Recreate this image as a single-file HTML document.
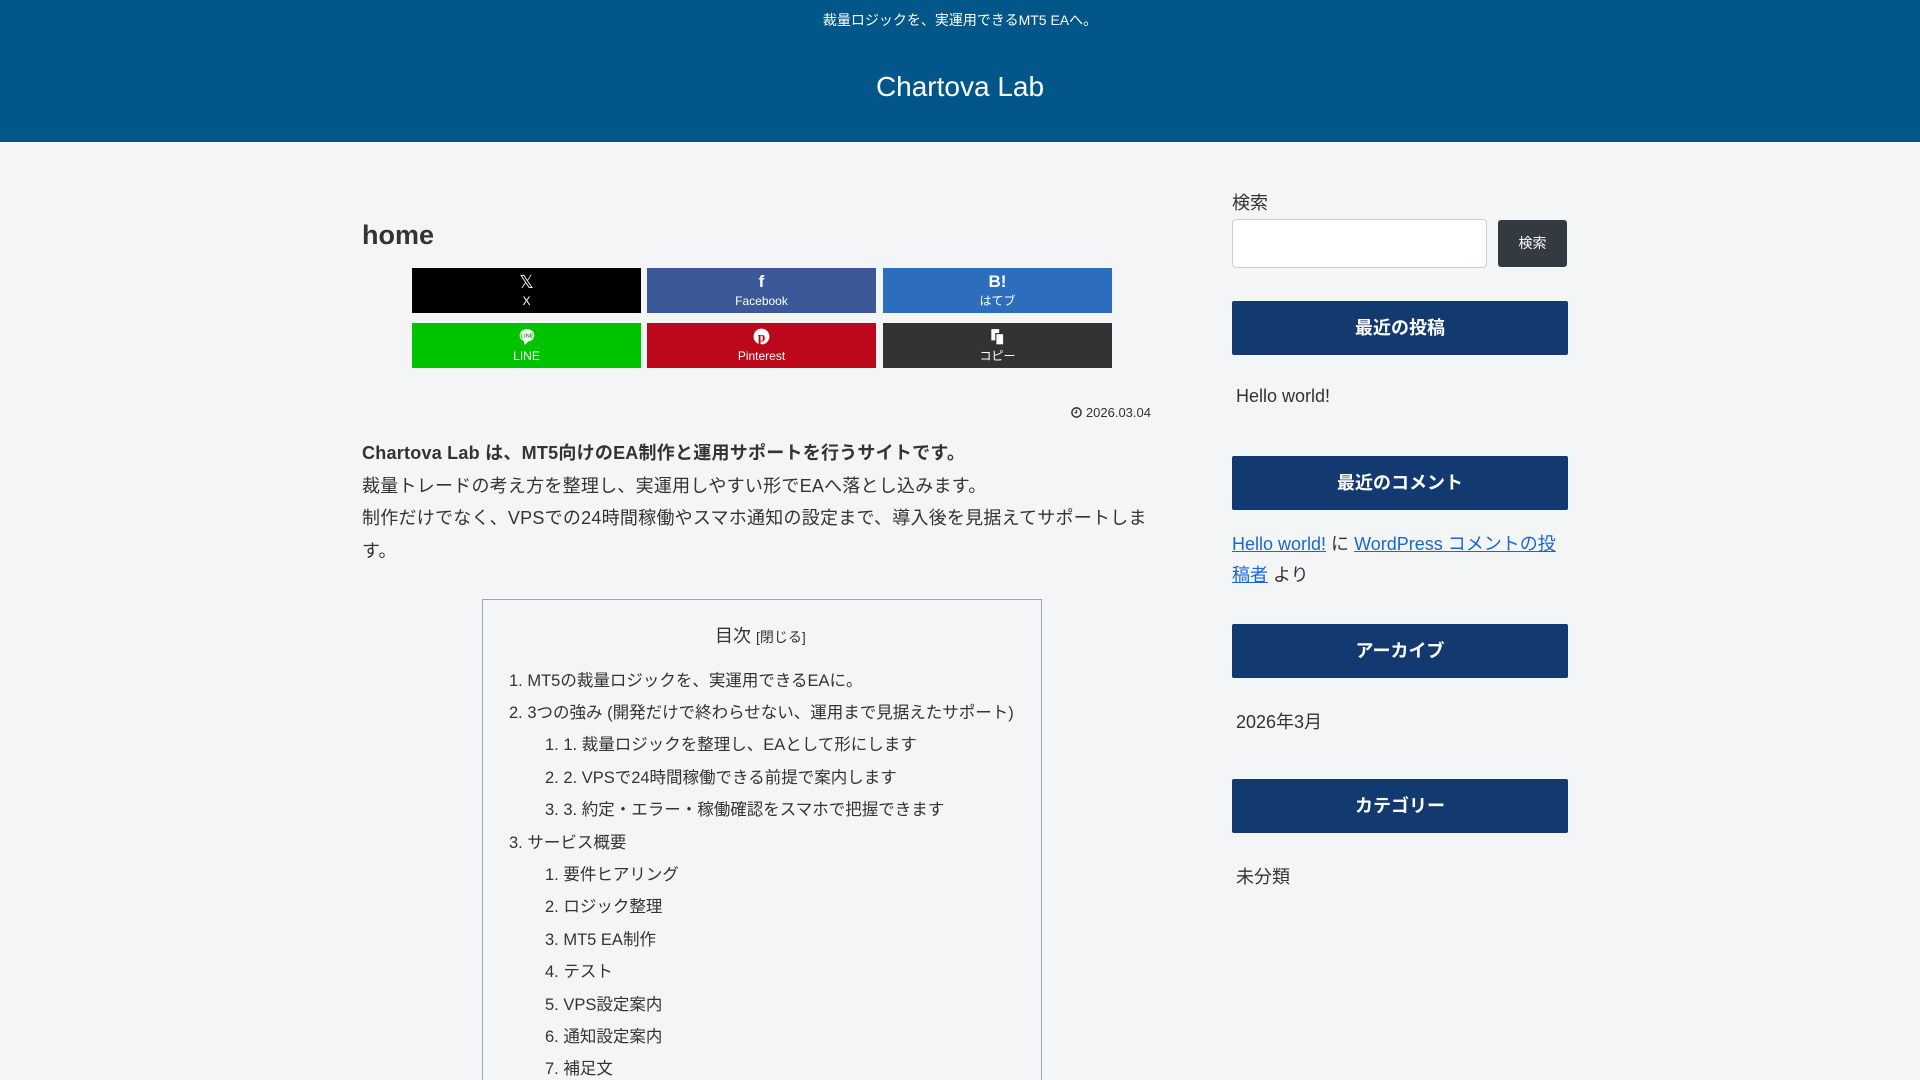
<!DOCTYPE html>
<html style="height:1080px;overflow:hidden"><head><meta charset="utf-8"><style>
*{margin:0;padding:0;box-sizing:border-box}
body{width:1920px;height:1080px;overflow:hidden;background:#f4f5f7;font-family:"Liberation Sans","Noto Sans CJK JP",sans-serif;color:#333;position:relative}
.a{position:absolute;white-space:nowrap}
#hd{position:absolute;left:0;top:0;width:1920px;height:142px;background:#02568a;color:#fff}
.sb{position:absolute;width:229px;height:45px;color:#fff;text-align:center;font-size:12px}
.sb .i{position:absolute;top:5px;left:0;right:0;font-size:17px;font-weight:bold;line-height:18px}
.sb .t{position:absolute;top:26px;left:0;right:0;line-height:14px}
.p{font-size:18px;line-height:32.5px;letter-spacing:0.24px}
.toc{position:absolute;left:482px;top:599px;width:560px;height:481px;border:1px solid #9aa5bd;border-bottom:none}
.ti{position:absolute;font-size:16.5px;white-space:nowrap;color:#333;line-height:20px}
.wh{position:absolute;left:1232px;width:336px;height:54px;background:#133a70;color:#fff;font-size:18px;font-weight:bold;text-align:center;line-height:54px;border-radius:2px}
.wt{position:absolute;font-size:18px;color:#333;white-space:nowrap}
a{color:#1967d2;text-decoration:underline}
</style></head><body>
<div id="hd">
<div class="a" style="left:0;width:1920px;text-align:center;top:11px;font-size:14px;line-height:18px">裁量ロジックを、実運用できるMT5 EAへ。</div>
<div class="a" style="left:0;width:1920px;text-align:center;top:70px;font-size:28px;line-height:34px">Chartova Lab</div>
</div>

<div class="a" style="left:362px;top:218px;font-size:27px;font-weight:bold;line-height:34px">home</div>

<div class="sb" style="left:412px;top:268px;background:#000"><div class="i" style="font-weight:normal;font-size:18px">𝕏</div><div class="t">X</div></div>
<div class="sb" style="left:647px;top:268px;background:#3b5998"><div class="i">f</div><div class="t">Facebook</div></div>
<div class="sb" style="left:883px;top:268px;background:#2c6ebd"><div class="i">B!</div><div class="t">はてブ</div></div>
<div class="sb" style="left:412px;top:323px;background:#00c300"><div class="i"><svg width="16" height="17" viewBox="0 0 14 15"><ellipse cx="7" cy="6.5" rx="6.5" ry="5.5" fill="#fff"/><path d="M4 11l1 4 3-3z" fill="#fff"/><text x="7" y="8.5" font-size="5" text-anchor="middle" fill="#00c300" font-family="Liberation Sans">LINE</text></svg></div><div class="t">LINE</div></div>
<div class="sb" style="left:647px;top:323px;background:#bd081c"><div class="i"><svg width="17" height="17" viewBox="0 0 15 15"><circle cx="7.5" cy="7.5" r="7" fill="#fff"/><text x="7.5" y="12" font-size="12" font-weight="bold" text-anchor="middle" fill="#bd081c" font-family="Liberation Serif">p</text></svg></div><div class="t">Pinterest</div></div>
<div class="sb" style="left:883px;top:323px;background:#333"><div class="i"><svg width="15" height="18" viewBox="0 0 13 16"><rect x="1" y="1" width="7" height="10" fill="#fff"/><rect x="5" y="5" width="7" height="10" fill="#fff" stroke="#333" stroke-width="1"/></svg></div><div class="t">コピー</div></div>

<div class="a" style="left:1070px;top:405px;font-size:13px;line-height:16px;width:81px;text-align:right"><svg width="11" height="11" viewBox="0 0 12 12" style="vertical-align:-1px"><circle cx="6" cy="6" r="5" fill="none" stroke="#333" stroke-width="1.6"/><path d="M6 3v3.3H3.8" fill="none" stroke="#333" stroke-width="1.4"/></svg> 2026.03.04</div>

<div class="a p" style="left:362px;top:437px;font-weight:bold">Chartova Lab は、MT5向けのEA制作と運用サポートを行うサイトです。</div>
<div class="a p" style="left:362px;top:470px">裁量トレードの考え方を整理し、実運用しやすい形でEAへ落とし込みます。</div>
<div class="a p" style="left:362px;top:502px">制作だけでなく、VPSでの24時間稼働やスマホ通知の設定まで、導入後を見据えてサポートしま</div>
<div class="a p" style="left:362px;top:535px">す。</div>

<div class="toc"></div>
<div class="ti" style="left:715px;top:626px;font-size:18px">目次 <span style="font-size:14px">[閉じる]</span></div>
<div class="ti" style="left:509px;top:671px">1. MT5の裁量ロジックを、実運用できるEAに。</div>
<div class="ti" style="left:509px;top:703px">2. 3つの強み (開発だけで終わらせない、運用まで見据えたサポート)</div>
<div class="ti" style="left:545px;top:735px">1. 1. 裁量ロジックを整理し、EAとして形にします</div>
<div class="ti" style="left:545px;top:768px">2. 2. VPSで24時間稼働できる前提で案内します</div>
<div class="ti" style="left:545px;top:800px">3. 3. 約定・エラー・稼働確認をスマホで把握できます</div>
<div class="ti" style="left:509px;top:833px">3. サービス概要</div>
<div class="ti" style="left:545px;top:865px">1. 要件ヒアリング</div>
<div class="ti" style="left:545px;top:897px">2. ロジック整理</div>
<div class="ti" style="left:545px;top:930px">3. MT5 EA制作</div>
<div class="ti" style="left:545px;top:962px">4. テスト</div>
<div class="ti" style="left:545px;top:995px">5. VPS設定案内</div>
<div class="ti" style="left:545px;top:1027px">6. 通知設定案内</div>
<div class="ti" style="left:545px;top:1059px">7. 補足文</div>

<div class="wt" style="left:1232px;top:189px">検索</div>
<div style="position:absolute;left:1232px;top:219px;width:255px;height:49px;background:#fff;border:1px solid #ccc;border-radius:4px"></div>
<div style="position:absolute;left:1498px;top:220px;width:69px;height:47px;background:#333a40;border-radius:3px;color:#fff;font-size:14px;text-align:center;line-height:47px">検索</div>

<div class="wh" style="top:301px">最近の投稿</div>
<div class="wt" style="left:1236px;top:386px">Hello world!</div>
<div class="wh" style="top:456px">最近のコメント</div>
<div class="wt" style="left:1232px;top:530px"><a>Hello world!</a> に <a>WordPress コメントの投</a></div>
<div class="wt" style="left:1232px;top:561px"><a>稿者</a> より</div>
<div class="wh" style="top:624px">アーカイブ</div>
<div class="wt" style="left:1236px;top:708px">2026年3月</div>
<div class="wh" style="top:779px">カテゴリー</div>
<div class="wt" style="left:1236px;top:863px">未分類</div>
</body></html>
